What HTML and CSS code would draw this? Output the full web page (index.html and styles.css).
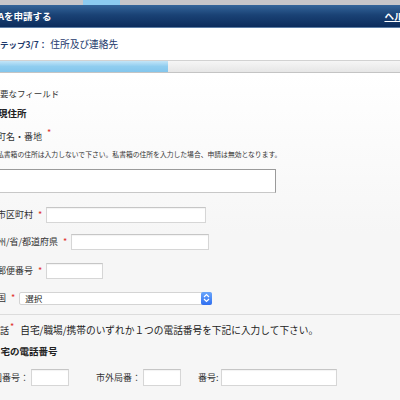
FILE: index.html
```html
<!DOCTYPE html>
<html lang="ja">
<head>
<meta charset="utf-8">
<link rel="stylesheet" href="styles.css">
</head>
<body>
<div class="topbar"><span class="tab"></span></div>
<header class="titlebar">
  <span class="title">Aを申請する</span>
  <a class="help" href="#">ヘルプ</a>
</header>
<div class="stepbar">
  <span class="step">ステップ3/7：</span>
  <span class="steptitle">住所及び連絡先</span>
</div>
<div class="progress"><div class="fill"></div></div>
<main class="content">
  <p class="req">必要なフィールド</p>
  <h2 class="sec">現住所</h2>
  <p class="lbl">町名・番地<span class="ast">*</span></p>
  <p class="note">私書箱の住所は入力しないで下さい。私書箱の住所を入力した場合、申請は無効となります。</p>
  <div class="area"></div>
  <div class="row r1"><span class="lbl">市区町村</span><span class="ast">*</span><span class="inp w160"></span></div>
  <div class="row r2"><span class="lbl">州/省/都道府県</span><span class="ast">*</span><span class="inp w138"></span></div>
  <div class="row r3"><span class="lbl">郵便番号</span><span class="ast">*</span><span class="inp w57"></span></div>
  <div class="row r4"><span class="lbl">国</span><span class="ast">*</span>
    <span class="select"><span class="seltext">選択</span><span class="stepper"><svg width="7" height="10" viewBox="0 0 7 10"><path d="M1 4 L3.5 1.5 L6 4 M1 6 L3.5 8.5 L6 6" fill="none" stroke="#fff" stroke-width="1.2"/></svg></span></span>
  </div>
  <hr class="sep">
  <p class="phone"><span class="pl">電話</span><span class="ast">*</span><span class="pnote">自宅/職場/携帯のいずれか１つの電話番号を下記に入力して下さい。</span></p>
  <h2 class="sec sec2">自宅の電話番号</h2>
  <div class="row prow">
    <span class="lbl plbl1">国番号：</span><span class="inp w38"></span>
    <span class="lbl plbl2">市外局番：</span><span class="inp w38"></span>
    <span class="lbl plbl3">番号:</span><span class="inp w116"></span>
  </div>
</main>
</body>
</html>
```
FILE: styles.css
```css
html, body { margin: 0; padding: 0; }
body {
  width: 400px;
  height: 400px;
  overflow: hidden;
  font-family: "Noto Sans CJK JP", "Noto Sans", sans-serif;
  color: #333;
  background: #f7f7f7;
}
p, h2 { margin: 0; }

.topbar { height: 5px; background: #c6c6ca; display: flex; }
.tab { width: 37px; margin-left: 83px; background: #8ccbf0; }

.titlebar {
  height: 22px;
  background: linear-gradient(#33659a, #1a4275 45%, #0c2c5c);
  border-bottom: 1px solid #5c7ea6;
  display: flex;
  align-items: center;
  color: #fff;
  font-weight: bold;
  font-size: 9.5px;
}
.title { margin-left: -2px; }
.help {
  margin-left: auto;
  margin-right: -13px;
  color: #fff;
  font-size: 9.5px;
  text-decoration: underline;
  white-space: nowrap;
}

.stepbar {
  height: 32px;
  background: #fff;
  display: flex;
  align-items: center;
  color: #1d3a6c;
  font-size: 8.5px;
}
.step {
  font-weight: bold;
  margin-left: -8.5px;
  flex: none;
  white-space: nowrap;
}
.steptitle { font-size: 9.7px; margin-left: 3px; white-space: nowrap; }

.progress {
  height: 11px;
  border-top: 1px solid #d2d2d2;
  border-bottom: 1px solid #c4c4c4;
  background: linear-gradient(#f6f6f6, #e6e6e6);
  display: flex;
}
.fill { width: 168px; background: linear-gradient(#c3e5f8, #8fcdef 50%, #83c6ed); }

.content {
  background: linear-gradient(#fff, #f6f6f6 160px);
  height: 330px;
  padding-top: 13px;
}
.req { font-size: 8.5px; line-height: 14px; margin-left: -8.5px; }
.sec { font-size: 9.5px; font-weight: bold; line-height: 14px; margin-top: 6px; margin-left: -2px; color: #222; white-space: nowrap; }
.lbl { font-size: 9px; line-height: 14px; margin-left: -3px; color: #333; white-space: nowrap; }
.content > .lbl { margin-top: 8px; }
.ast { color: #e0302a; font-size: 9px; vertical-align: 4px; margin-left: 5px; line-height: 10px; }
.note { font-size: 6.8px; line-height: 12px; margin-top: 4px; margin-left: -3px; white-space: nowrap; }
.area {
  margin-top: 9px;
  margin-left: -20px;
  width: 294px;
  height: 22px;
  background: #fff;
  border: 1px solid #9a9a9a;
  border-bottom-color: #c8c8c8;
}

.row { display: flex; align-items: center; }
.r1 { margin-top: 14px; }
.r2 { margin-top: 11px; }
.r3 { margin-top: 13px; }
.r4 { margin-top: 12px; }
.row .lbl { margin-left: -3px; }
.inp {
  display: block;
  height: 14px;
  margin-left: 4px;
  background: #fff;
  border: 1px solid #d6d6d6;
  border-top-color: #c6c6c6;
  box-shadow: inset 0 1px 1px rgba(0,0,0,0.05);
}
.w160 { width: 158px; }
.w138 { width: 136px; }
.w57 { width: 55px; }
.w38 { width: 36px; }
.w116 { width: 114px; }

.select {
  display: flex;
  align-items: center;
  margin-left: 4px;
  width: 193px;
  height: 13px;
  background: #fff;
  border: 1px solid #d4d4d4;
  border-radius: 2px;
  box-sizing: border-box;
}
.seltext { font-size: 8.5px; margin-left: 5px; color: #222; flex: 1; line-height: 12px; }
.stepper {
  width: 11px;
  height: 13px;
  margin-right: -1px;
  border-radius: 2px;
  background: linear-gradient(#6aa6fb, #2f6ff0);
  display: flex;
  align-items: center;
  justify-content: center;
}

.sep { margin: 9px 0 0; border: 0; border-top: 1px solid #dcdcdc; height: 0; }
.phone { margin-top: 7px; font-size: 9px; line-height: 14px; white-space: nowrap; color: #222; }
.pl { margin-left: -9px; }
.phone .ast { margin-left: 1px; }
.pnote { margin-left: 6px; font-size: 9.7px; }
.sec2 { margin-left: -9px; margin-top: 6px; }
.prow { margin-top: 11px; }
.prow .plbl1 { margin-left: -7px; }
.prow .plbl2 { margin-left: 27px; }
.prow .plbl3 { margin-left: 17px; }
.prow .inp { height: 15px; margin-left: 2px; }
```
